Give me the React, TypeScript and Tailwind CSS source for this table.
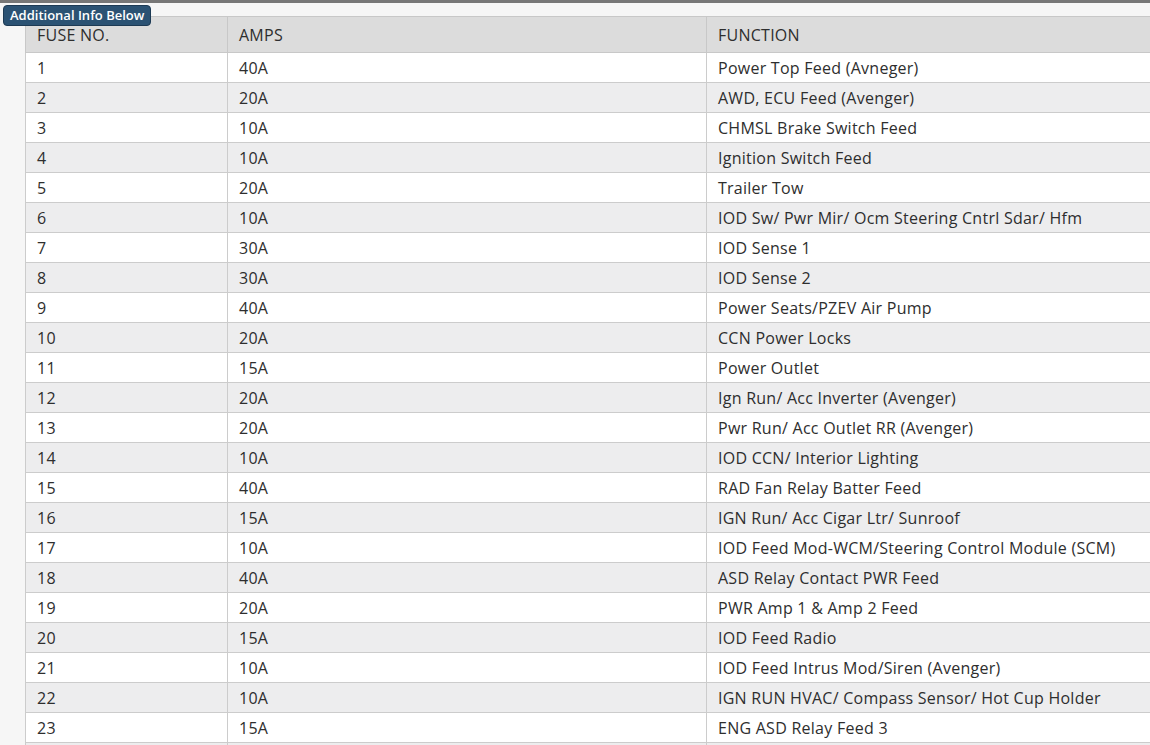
import React from "react";

const rows: [string, string, string][] = [
  ["1", "40A", "Power Top Feed (Avneger)"],
  ["2", "20A", "AWD, ECU Feed (Avenger)"],
  ["3", "10A", "CHMSL Brake Switch Feed"],
  ["4", "10A", "Ignition Switch Feed"],
  ["5", "20A", "Trailer Tow"],
  ["6", "10A", "IOD Sw/ Pwr Mir/ Ocm Steering Cntrl Sdar/ Hfm"],
  ["7", "30A", "IOD Sense 1"],
  ["8", "30A", "IOD Sense 2"],
  ["9", "40A", "Power Seats/PZEV Air Pump"],
  ["10", "20A", "CCN Power Locks"],
  ["11", "15A", "Power Outlet"],
  ["12", "20A", "Ign Run/ Acc Inverter (Avenger)"],
  ["13", "20A", "Pwr Run/ Acc Outlet RR (Avenger)"],
  ["14", "10A", "IOD CCN/ Interior Lighting"],
  ["15", "40A", "RAD Fan Relay Batter Feed"],
  ["16", "15A", "IGN Run/ Acc Cigar Ltr/ Sunroof"],
  ["17", "10A", "IOD Feed Mod-WCM/Steering Control Module (SCM)"],
  ["18", "40A", "ASD Relay Contact PWR Feed"],
  ["19", "20A", "PWR Amp 1 & Amp 2 Feed"],
  ["20", "15A", "IOD Feed Radio"],
  ["21", "10A", "IOD Feed Intrus Mod/Siren (Avenger)"],
  ["22", "10A", "IGN RUN HVAC/ Compass Sensor/ Hot Cup Holder"],
  ["23", "15A", "ENG ASD Relay Feed 3"],
];

export default function App() {
  return (
    <div
      className="relative w-[1150px] h-[745px] overflow-hidden bg-[#f6f6f6] text-[#2e2e2e]"
      style={{ fontFamily: '"Open Sans", "Noto Sans", sans-serif' }}
    >
      <div className="h-[3px] bg-[#777777]" />
      <div className="pl-[25px] pt-[13px]">
        <table className="border-collapse w-[1200px] bg-white text-[16px] leading-[20px] tracking-[0.016em]">
          <colgroup>
            <col className="w-[202px]" />
            <col className="w-[479px]" />
            <col />
          </colgroup>
          <thead>
            <tr className="bg-[#dcdcdc] h-[36px]">
              <th className="border border-[#c8c8c8] px-[11px] text-left font-normal">FUSE NO.</th>
              <th className="border border-[#c8c8c8] px-[11px] text-left font-normal">AMPS</th>
              <th className="border border-[#c8c8c8] px-[11px] text-left font-normal">FUNCTION</th>
            </tr>
          </thead>
          <tbody>
            {rows.map((r, i) => (
              <tr key={r[0]} className={`h-[30px] ${i % 2 === 1 ? "bg-[#ededee]" : "bg-white"}`}>
                <td className="border border-[#cccccc] px-[11px]">{r[0]}</td>
                <td className="border border-[#cccccc] px-[11px]">{r[1]}</td>
                <td className="border border-[#cccccc] px-[11px]">{r[2]}</td>
              </tr>
            ))}
            <tr className="h-[30px] bg-[#ededee]">
              <td className="border border-[#cccccc] px-[11px]"></td>
              <td className="border border-[#cccccc] px-[11px]"></td>
              <td className="border border-[#cccccc] px-[11px]"></td>
            </tr>
          </tbody>
        </table>
      </div>
      <div className="absolute left-[3px] top-[5px] h-[21px] px-[6px] flex items-center rounded-[4px] bg-[#2b5273] border border-[#1d3a54] text-white text-[13px] font-semibold leading-none">
        Additional Info Below
      </div>
    </div>
  );
}
